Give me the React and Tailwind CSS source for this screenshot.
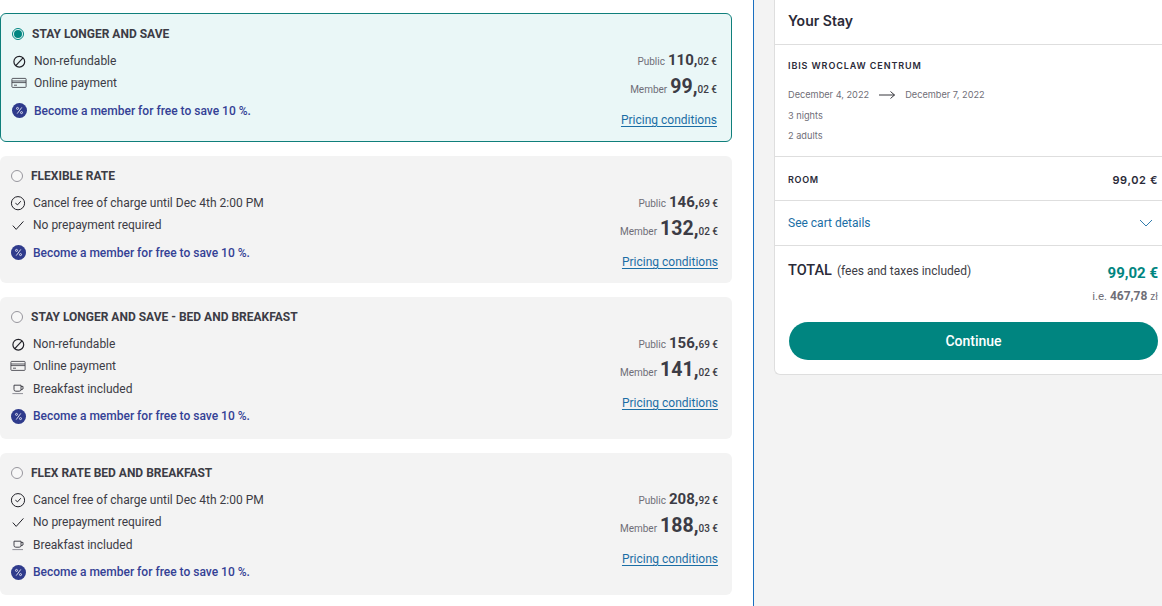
import React from "react";

const Radio = ({ on }) =>
  on ? (
    <span className="flex h-[12px] w-[12px] shrink-0 items-center justify-center rounded-full border border-[#008580]">
      <span className="h-[8px] w-[8px] rounded-full bg-[#008580]" />
    </span>
  ) : (
    <span className="h-[12px] w-[12px] shrink-0 rounded-full border border-[#97969d] bg-[#f7f7f7]" />
  );

const Ban = () => (
  <svg width="16" height="16" viewBox="0 0 16 16" fill="none" stroke="#202027" strokeWidth="1.2">
    <circle cx="8.3" cy="8.7" r="5.4" />
    <path d="M4.8 12.6 L12 4.9" />
  </svg>
);
const CardIco = () => (
  <svg width="16" height="16" viewBox="0 0 16 16" fill="none" stroke="#33333c" strokeWidth="0.8">
    <rect x="0.9" y="3.4" width="14.2" height="9" rx="0.8" />
    <path d="M1 6 H15 M1 7.6 H15" />
    <path d="M3 10.2 H6" />
  </svg>
);
const Clock = () => (
  <svg width="16" height="16" viewBox="0 0 16 16" fill="none" stroke="#202027" strokeWidth="1">
    <circle cx="8" cy="8.2" r="6.6" />
    <path d="M5.4 8.2 L7.6 9.8 L10.8 6.2" />
  </svg>
);
const Check = () => (
  <svg width="16" height="16" viewBox="0 0 16 16" fill="none" stroke="#202027" strokeWidth="1">
    <path d="M2.8 8.6 L6.2 12.4 L13.4 4.4" />
  </svg>
);
const Cup = () => (
  <svg width="16" height="16" viewBox="0 0 16 16" fill="none" stroke="#33333c" strokeWidth="0.9">
    <path d="M4 4.2 H11 V8.4 Q11 10.2 9.2 10.2 H5.8 Q4 10.2 4 8.4 Z" />
    <path d="M11 5.4 H13 V8 L11 8.8" />
    <path d="M2.4 12.6 H13" stroke="#85848c" />
  </svg>
);
const Percent = () => (
  <span className="flex h-[15px] w-[15px] shrink-0 items-center justify-center rounded-full bg-[#2f3b8c]">
    <svg width="9" height="9" viewBox="0 0 9 9" fill="none" stroke="#e8e9f4" strokeWidth="0.9">
      <path d="M6.8 1.4 L2.2 7.6" />
      <circle cx="2.5" cy="2.4" r="1" />
      <circle cx="6.5" cy="6.6" r="1" />
    </svg>
  </span>
);

const Row = ({ icon, children }) => (
  <div className="flex h-[22.5px] items-center gap-[7px] pl-[10px] text-[12px] text-[#3c3c45]">
    <span className="flex h-[16px] w-[16px] shrink-0 items-center justify-center">{icon}</span>
    <span>{children}</span>
  </div>
);

const Rate = ({ selected, title, rows, pub, mem }) => (
  <div
    className={`flex justify-between rounded-[6px] ${
      selected ? "border border-[#0f7f7b] bg-[#eaf7f7]" : "bg-[#f3f3f3]"
    }`}
  >
    <div className="pt-[9.5px] pb-[13px]">
      <div className="flex h-[20px] items-center gap-[8px] pl-[11px] text-[12px] font-bold text-[#3c3c45]">
        <Radio on={selected} />
        <span>{title}</span>
      </div>
      <div className="mt-[6px]">
        {rows.map(([icon, text]) => (
          <Row key={text} icon={icon}>
            {text}
          </Row>
        ))}
      </div>
      <div className="mt-[6px] flex h-[20px] items-center gap-[7.5px] pl-[10.5px] text-[12px] font-medium text-[#344195]">
        <Percent />
        <span>Become a member for free to save 10 %.</span>
      </div>
    </div>
    <div className="flex flex-col items-end pt-[35px] pr-[14px] pb-[11px] text-[#3c3c45]">
      <div className="flex h-[20px] items-baseline">
        <span className="mr-[3px] text-[10px] text-[#6f6e77]">Public</span>
        <span className="text-[15px] font-bold">{pub[0]},</span>
        <span className="text-[10px] font-medium">{pub[1]} €</span>
      </div>
      <div className="mt-[4px] flex h-[28px] items-baseline">
        <span className="mr-[3px] text-[10px] text-[#6f6e77]">Member</span>
        <span className="text-[19.5px] leading-[28px] font-bold">{mem[0]},</span>
        <span className="text-[10px] font-medium">{mem[1]} €</span>
      </div>
      <a className="mt-[9px] flex h-[20px] items-center text-[12px] text-[#1b6ea5] underline underline-offset-2">Pricing conditions</a>
    </div>
  </div>
);

const promoA = [
  [<Ban />, "Non-refundable"],
  [<CardIco />, "Online payment"],
];
const promoF = [
  [<Clock />, "Cancel free of charge until Dec 4th 2:00 PM"],
  [<Check />, "No prepayment required"],
];
const bf = [<Cup />, "Breakfast included"];

export default function App() {
  return (
    <div className="flex h-[606px] w-[1162px] overflow-hidden bg-[#f3f3f3] font-['Roboto',sans-serif]">
      <div className="flex w-[754px] shrink-0 flex-col gap-[14px] border-r border-[#1a6fc0] bg-white pt-[13px] pr-[21px]">
        <Rate selected title="STAY LONGER AND SAVE" rows={promoA} pub={["110", "02"]} mem={["99", "02"]} />
        <Rate title="FLEXIBLE RATE" rows={promoF} pub={["146", "69"]} mem={["132", "02"]} />
        <Rate title="STAY LONGER AND SAVE - BED AND BREAKFAST" rows={[...promoA, bf]} pub={["156", "69"]} mem={["141", "02"]} />
        <Rate title="FLEX RATE BED AND BREAKFAST" rows={[...promoF, bf]} pub={["208", "92"]} mem={["188", "03"]} />
      </div>
      <div className="flex-1 pl-[20px]">
        <div className="h-[375px] rounded-bl-[6px] border-b border-l border-[#dedede] bg-white">
          <div className="flex h-[45px] items-center border-b border-[#dedede] pb-[3px] pl-[13px] font-['Inter',sans-serif] text-[14px] font-semibold text-[#2a2a38]">
            Your Stay
          </div>
          <div className="h-[112px] border-b border-[#dedede] pt-[14px] pl-[13px] font-['Inter',sans-serif] text-[9.2px] text-[#6f6e77]">
            <div className="flex h-[14px] items-center text-[9px] font-semibold tracking-[0.9px] text-[#2a2a38]">
              IBIS WROCLAW CENTRUM
            </div>
            <div className="mt-[15px] flex h-[14px] items-center">
              <span>December 4, 2022</span>
              <svg className="mx-[9px]" width="18" height="10" viewBox="0 0 18 10" fill="none" stroke="#202027" strokeWidth="0.9">
                <path d="M1 5 H16.5 M12.5 1.5 L16.5 5 L12.5 8.5" />
              </svg>
              <span>December 7, 2022</span>
            </div>
            <div className="mt-[7px] flex h-[14px] items-center">3 nights</div>
            <div className="mt-[6px] flex h-[14px] items-center">2 adults</div>
          </div>
          <div className="flex h-[44px] items-center justify-between border-b border-[#dedede] pt-[3px] pr-[4px] pl-[13px] font-['Inter',sans-serif] font-semibold text-[#2a2a38]">
            <span className="text-[9px] tracking-[0.7px]">ROOM</span>
            <span className="text-[11px] tracking-[0.6px]">99,02 €</span>
          </div>
          <div className="flex h-[45px] items-center justify-between border-b border-[#dedede] pr-[9px] pl-[13px] text-[12px] text-[#1b6ea5]">
            <span>See cart details</span>
            <svg width="14" height="8" viewBox="0 0 14 8" fill="none" stroke="#1b6ea5" strokeWidth="0.9">
              <path d="M1 1 L7 7 L13 1" />
            </svg>
          </div>
          <div className="pt-[14px] pr-[4px] pl-[14px]">
            <div className="flex items-start justify-between">
              <div className="-ml-[1px] flex h-[22px] items-center text-[12px] text-[#3c3c45]">
                <span className="mr-[5px] text-[14.5px] font-medium text-[#2a2a38]">TOTAL</span>
                (fees and taxes included)
              </div>
              <span className="mt-[2px] text-[15px] font-bold text-[#008580]">99,02 €</span>
            </div>
            <div className="mt-[1px] flex h-[20px] items-baseline justify-end text-[11.5px] leading-[20px] text-[#6f6e77]">
              i.e.&nbsp;<span className="text-[12px] font-bold">467,78</span>
              <span className="ml-[3px] text-[10px]">zł</span>
            </div>
            <button className="mt-[16px] flex h-[38px] w-[369px] items-center justify-center rounded-full bg-[#008580] pt-[1px] text-[14px] font-medium text-white">
              Continue
            </button>
          </div>
        </div>
      </div>
    </div>
  );
}
